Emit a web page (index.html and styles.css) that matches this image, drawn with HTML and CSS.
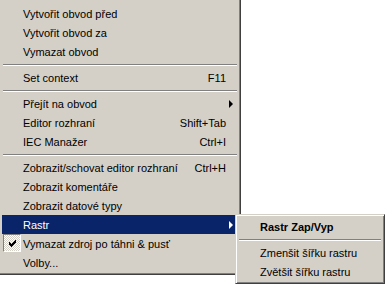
FILE: index.html
```html
<!DOCTYPE html>
<html lang="cs">

<head>
    <meta charset="UTF-8">
    <meta name="viewport" content="width=device-width, initial-scale=1.0">
    <title>Kontextové menu</title>
    <link rel="stylesheet" href="styles.css">
</head>

<body>
    <div class="menu main-menu">
        <div class="item">Vytvořit obvod před</div>
        <div class="item">Vytvořit obvod za</div>
        <div class="item">Vymazat obvod</div>
        <div class="sep"></div>
        <div class="item"><span class="label">Set context</span><span class="key">F11</span></div>
        <div class="sep"></div>
        <div class="item"><span class="label">Přejít na obvod</span><span class="arrow"></span></div>
        <div class="item"><span class="label">Editor rozhraní</span><span class="key">Shift+Tab</span></div>
        <div class="item"><span class="label">IEC Manažer</span><span class="key">Ctrl+I</span></div>
        <div class="sep"></div>
        <div class="item"><span class="label">Zobrazit/schovat editor rozhraní</span><span class="key">Ctrl+H</span></div>
        <div class="item">Zobrazit komentáře</div>
        <div class="item">Zobrazit datové typy</div>
        <div class="item active"><span class="label">Rastr</span><span class="arrow"></span></div>
        <div class="item checked">
            <span class="check">
                <svg width="7" height="7" viewBox="0 0 7 7"><path d="M0 2h1v1h1v1h1v-1h1v-1h1v-1h1v-1h1v3h-1v1h-1v1h-1v1h-1v1h-1v-1h-1v-1h-1z" fill="#000"/></svg>
            </span>
            Vymazat zdroj po táhni &amp; pusť
        </div>
        <div class="item">Volby...</div>
    </div>

    <div class="menu submenu">
        <div class="item bold">Rastr Zap/Vyp</div>
        <div class="sep"></div>
        <div class="item">Zmenšit šířku rastru</div>
        <div class="item">Zvětšit šířku rastru</div>
    </div>
</body>

</html>
```

FILE: styles.css
```css
body {
    margin: 0;
    width: 386px;
    height: 287px;
    overflow: hidden;
    position: relative;
    background-color: #ffffff;
    font-family: "Liberation Sans", Arial, sans-serif;
    font-size: 11px;
    color: #000000;
}

.menu {
    box-sizing: border-box;
    background-color: #d4d0c8;
    border: 1px solid;
    border-color: #d4d0c8 #404040 #404040 #d4d0c8;
    box-shadow: inset 1px 1px #ffffff, inset -1px -1px #808080;
    padding: 2px;
}

.main-menu {
    width: 244px;
    margin: -3px 0 0 -3px;
    padding: 6px 2px 2px 4px;
}

.submenu {
    position: absolute;
    left: 235px;
    top: 214px;
    width: 150px;
    z-index: 2;
}

.item {
    position: relative;
    display: flex;
    align-items: center;
    height: 19px;
    padding: 0 5px 0 21px;
    white-space: nowrap;
}

.submenu .item {
    padding-left: 22px;
}

.label {
    flex: 1;
}

.key {
    margin-right: 7px;
}

.arrow {
    width: 0;
    height: 0;
    border-left: 4px solid currentColor;
    border-top: 4px solid transparent;
    border-bottom: 4px solid transparent;
}

.active {
    background-color: #0a246a;
    color: #ffffff;
}

.bold {
    font-weight: bold;
}

.sep {
    box-sizing: border-box;
    height: 7px;
    padding-top: 3px;
    margin: 0 1px;
}

.sep::before {
    content: "";
    display: block;
    border-top: 1px solid #808080;
    border-bottom: 1px solid #ffffff;
}

.check {
    position: absolute;
    left: 1px;
    top: 0;
    box-sizing: border-box;
    width: 18px;
    height: 18px;
    display: flex;
    align-items: center;
    justify-content: center;
    border: 1px solid;
    border-color: #808080 #ffffff #ffffff #808080;
    background-color: #ffffff;
    background-image: conic-gradient(#d4d0c8 25%, #ffffff 0 50%, #d4d0c8 0 75%, #ffffff 0);
    background-size: 2px 2px;
}
```
